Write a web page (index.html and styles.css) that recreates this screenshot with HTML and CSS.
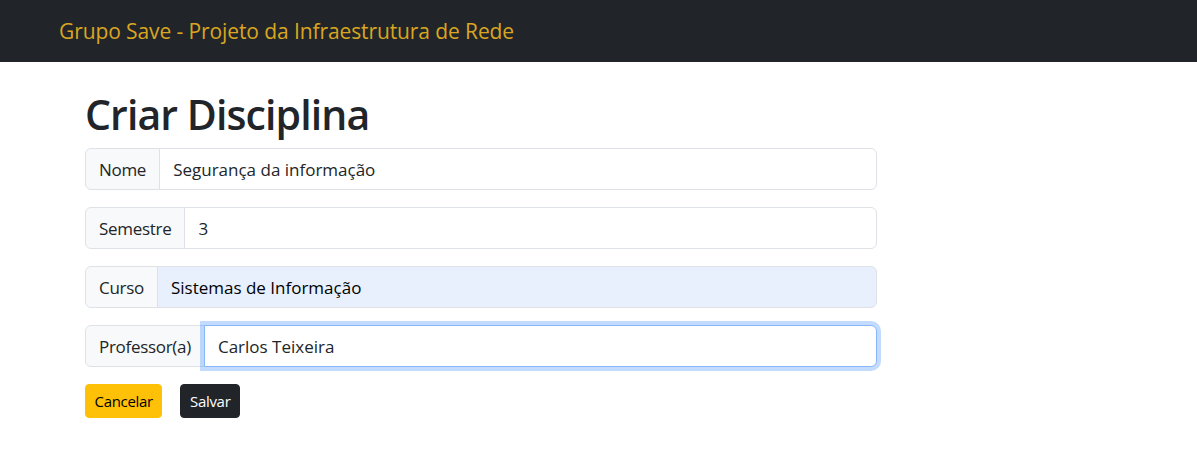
FILE: index.html
```html
<!DOCTYPE html>
<html lang="pt">
<head>
<meta charset="utf-8">
<title>Criar Disciplina</title>
<link rel="stylesheet" href="styles.css">
</head>
<body>
<nav class="navbar">
  <span class="brand">Grupo Save - Projeto da Infraestrutura de Rede</span>
</nav>
<main class="container">
  <h1 class="title">Criar Disciplina</h1>
  <form class="form">
    <div class="input-group">
      <span class="addon">Nome</span>
      <input class="control" type="text" value="Segurança da informação">
    </div>
    <div class="input-group">
      <span class="addon">Semestre</span>
      <input class="control" type="text" value="3">
    </div>
    <div class="input-group">
      <span class="addon">Curso</span>
      <input class="control autofill" type="text" value="Sistemas de Informação">
    </div>
    <div class="input-group">
      <span class="addon">Professor(a)</span>
      <input class="control focused" type="text" value="Carlos Teixeira">
    </div>
    <div class="actions">
      <button type="button" class="btn btn-warning">Cancelar</button>
      <button type="button" class="btn btn-dark">Salvar</button>
    </div>
  </form>
</main>
</body>
</html>
```
FILE: styles.css
```css
* { box-sizing: border-box; }
body {
  margin: 0;
  font-family: "Open Sans", "Noto Sans", sans-serif;
  color: #212529;
  background: #fff;
}
.navbar {
  height: 62px;
  background: #212529;
  display: flex;
  align-items: center;
  padding-left: 59px;
}
.brand {
  color: #daa520;
  font-size: 21px;
  letter-spacing: -0.1px;
}
.container {
  padding-left: 85px;
  padding-top: 26px;
}
.title {
  margin: 0 0 8px 0;
  font-size: 41px;
  font-weight: 600;
  line-height: 52px;
  letter-spacing: -0.9px;
}
.form { width: 792px; }
.input-group {
  display: flex;
  height: 42px;
  margin-bottom: 17px;
  font-size: 17px;
  letter-spacing: -0.3px;
}
.addon {
  display: flex;
  align-items: center;
  padding: 0 13px;
  background: #f8f9fa;
  border: 1px solid #dee2e6;
  border-radius: 6px 0 0 6px;
  white-space: nowrap;
}
.control {
  flex: 1;
  margin-left: -1px;
  padding: 0 13px;
  border: 1px solid #dee2e6;
  border-radius: 0 6px 6px 0;
  font: inherit;
  color: #212529;
  background: #fff;
  outline: none;
}
.control.autofill {
  background: #e8f0fe;
  color: #000;
}
.control.focused {
  border-color: #86b7fe;
  box-shadow: 0 0 0 4px rgba(13, 110, 253, 0.25);
  position: relative;
}
.actions {
  display: flex;
  gap: 18px;
}
.btn {
  height: 34px;
  padding: 0 8.5px;
  border-radius: 4px;
  border: 1px solid transparent;
  font-family: inherit;
  font-size: 15px;
  letter-spacing: -0.3px;
}
.btn-warning { background: #ffc107; border-color: #ffc107; color: #000; }
.btn-dark { background: #212529; border-color: #212529; color: #fff; }
```
